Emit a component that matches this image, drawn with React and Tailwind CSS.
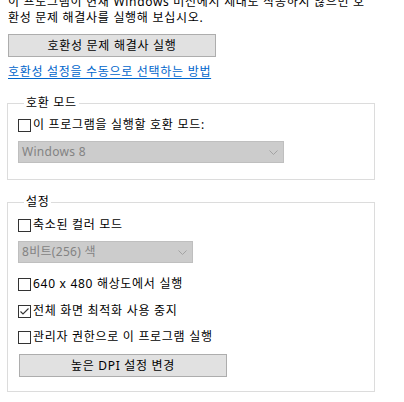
import React from "react";

const font = { fontFamily: '"Noto Sans", "Noto Sans CJK KR", sans-serif' };

function Checkbox({ checked, label, className }) {
  return (
    <div className={`flex h-[16px] items-center ${className}`}>
      <span className="flex h-[13px] w-[13px] shrink-0 items-center justify-center border border-[#333333] bg-white">
        {checked && (
          <svg width="11" height="11" viewBox="0 0 11 11" fill="none">
            <path d="M1.5 5.5 L4 8 L9.5 2.5" stroke="#333333" strokeWidth="1.1" />
          </svg>
        )}
      </span>
      <span className="ml-[2px] whitespace-nowrap">{label}</span>
    </div>
  );
}

function Select({ value, width, className }) {
  return (
    <div
      className={`flex h-[22px] items-center justify-between border border-[#bfbfbf] bg-[#cccccc] pl-[3px] pr-[5px] text-[#838383] ${width} ${className}`}
    >
      <span className="whitespace-nowrap tracking-[0.3px]">{value}</span>
      <svg width="9" height="5" viewBox="0 0 9 5" fill="none">
        <path d="M0.5 0.5 L4.5 4.5 L8.5 0.5" stroke="#a3a3a3" strokeWidth="1" />
      </svg>
    </div>
  );
}

function Button({ children, className }) {
  return (
    <div
      className={`flex h-[23px] w-[208px] items-center justify-center border border-[#adadad] bg-[#e1e1e1] text-black ${className}`}
    >
      {children}
    </div>
  );
}

export default function App() {
  return (
    <div
      className="h-[402px] w-[404px] overflow-hidden bg-white text-[12px] leading-[16px] tracking-[0.7px] text-black"
      style={font}
    >
      <div className="mt-[-6px] pl-[8px]">
        {/* intro text */}
        <p className="whitespace-nowrap">이 프로그램이 현재 Windows 버전에서 제대로 작동하지 않으면 호</p>
        <p className="whitespace-nowrap">환성 문제 해결사를 실행해 보십시오.</p>

        <Button className="mt-[8px]">호환성 문제 해결사 실행</Button>

        <p className="mt-[7px] text-[#0066cc] underline underline-offset-2">
          호환성 설정을 수동으로 선택하는 방법
        </p>
      </div>

      {/* 호환 모드 */}
      <fieldset className="mt-[15px] ml-[7px] w-[368px] border border-[#dcdcdc] pb-[16px] pl-[10px]">
        <legend className="ml-[6px] px-[2px]">호환 모드</legend>
        <Checkbox label="이 프로그램을 실행할 호환 모드:" className="mt-[6px]" />
        <Select value="Windows 8" width="w-[266px]" className="mt-[8px]" />
      </fieldset>

      {/* 설정 */}
      <fieldset className="mt-[14px] ml-[7px] w-[368px] border border-[#dcdcdc] pb-[14px] pl-[10px]">
        <legend className="ml-[6px] px-[2px]">설정</legend>
        <Checkbox label="축소된 컬러 모드" className="mt-[7px]" />
        <Select value="8비트(256) 색" width="w-[175px]" className="mt-[8px]" />
        <Checkbox label="640 x 480 해상도에서 실행" className="mt-[13px]" />
        <Checkbox checked label="전체 화면 최적화 사용 중지" className="mt-[11px]" />
        <Checkbox label="관리자 권한으로 이 프로그램 실행" className="mt-[10px]" />
        <Button className="mt-[9px] ml-[1px]">높은 DPI 설정 변경</Button>
      </fieldset>
    </div>
  );
}
